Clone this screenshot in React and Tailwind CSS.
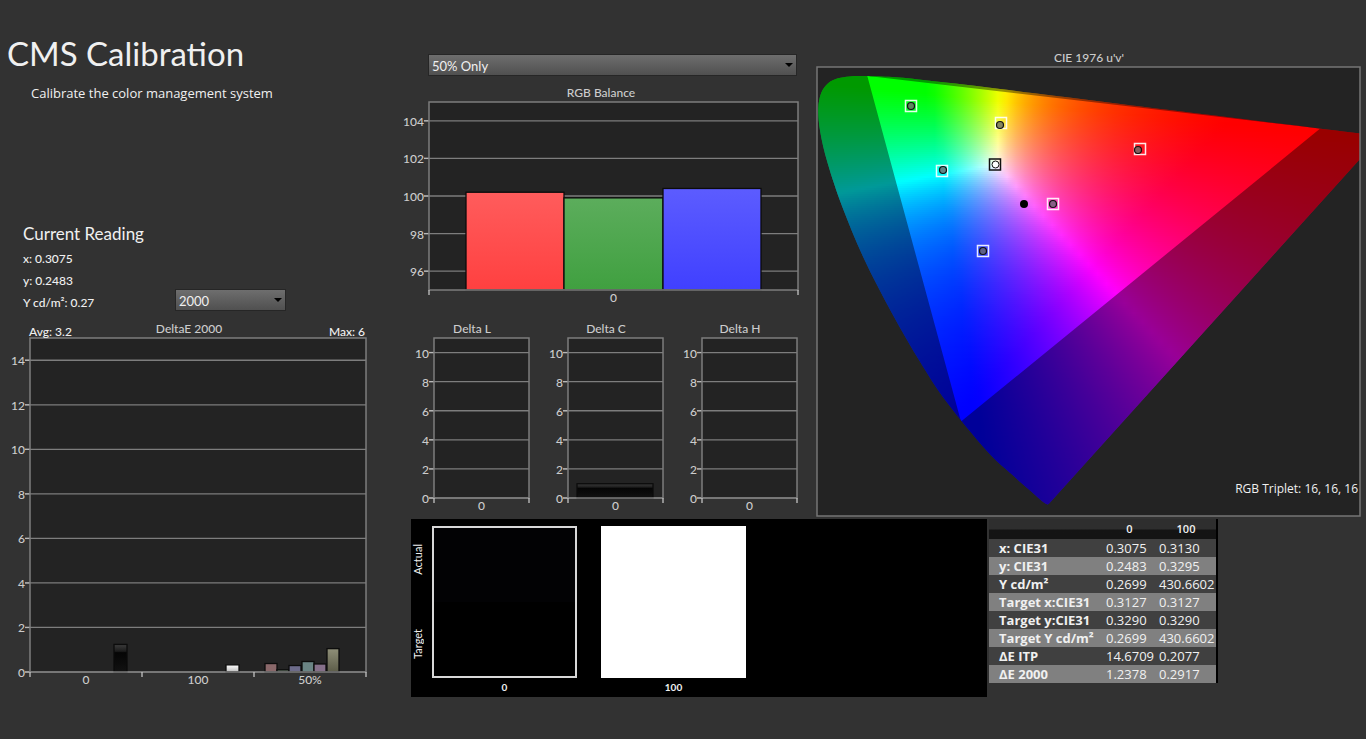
import { useMemo } from 'react';

const LINE = '#7d7d7d';

// ---------- data ----------

const deltaEBars = [
  { x: 114, w: 13, value: 1.24, fill: 'url(#barBlack)' },
  { x: 226, w: 13, value: 0.32, fill: 'url(#barWhite)' },
  { x: 265, w: 12, value: 0.38, fill: '#8a686a' },
  { x: 277, w: 12, value: 0.1, fill: '#5f6f5f' },
  { x: 289, w: 12, value: 0.29, fill: '#6c6b8a' },
  { x: 302, w: 12, value: 0.47, fill: '#6a8484' },
  { x: 314, w: 12, value: 0.36, fill: '#86708a' },
  { x: 327, w: 12, value: 1.05, fill: 'url(#barOlive)' },
];

const rgbBars = [
  { x: 64, w: 98, value: 100.2, fill: 'url(#barRed)' },
  { x: 162, w: 99, value: 99.9, fill: 'url(#barGreen)' },
  { x: 261, w: 98, value: 100.4, fill: 'url(#barBlue)' },
];

const deltas = [
  { title: 'Delta L', bars: [] },
  { title: 'Delta C', bars: [{ x: 33, w: 76, value: 0.98, fill: 'url(#barBlack)' }] },
  { title: 'Delta H', bars: [] },
];

const readings = [
  ['x: CIE31', '0.3075', '0.3130'],
  ['y: CIE31', '0.2483', '0.3295'],
  ['Y cd/m²', '0.2699', '430.6602'],
  ['Target x:CIE31', '0.3127', '0.3127'],
  ['Target y:CIE31', '0.3290', '0.3290'],
  ['Target Y cd/m²', '0.2699', '430.6602'],
  ['ΔE ITP', '14.6709', '0.2077'],
  ['ΔE 2000', '1.2378', '0.2917'],
];

// target square and measured dot, in plot pixels
const markers = [
  { box: [95, 40], dot: [95, 40], fill: '#5f875f' },
  { box: [185, 57], dot: [184, 59], fill: '#87875f' },
  { box: [126, 105], dot: [127, 104], fill: '#5f8787' },
  { box: [324, 83], dot: [322, 84], fill: '#875f5f' },
  { box: [237, 138], dot: [237, 138], fill: '#875f87' },
  { box: [167, 185], dot: [167, 185], fill: '#5f5f87' },
];

// ---------- u'v' diagram ----------

const U0 = 1;
const U_SCALE = 904;
const V0 = 450;
const V_SCALE = 750;

// spectral locus, CIE 1931 xy
const locusXY = [
  [0.1741, 0.005], [0.1714, 0.0051], [0.1644, 0.0109], [0.1566, 0.0177],
  [0.144, 0.0297], [0.1241, 0.0578], [0.1096, 0.0868], [0.0913, 0.1327],
  [0.0687, 0.2007], [0.0454, 0.295], [0.0235, 0.4127], [0.0082, 0.5384],
  [0.0039, 0.6548], [0.0139, 0.7502], [0.0389, 0.812], [0.0743, 0.8338],
  [0.1142, 0.8262], [0.1547, 0.8059], [0.2296, 0.7543], [0.3016, 0.6923],
  [0.3731, 0.6245], [0.4441, 0.5547], [0.5125, 0.4866], [0.5752, 0.4242],
  [0.627, 0.3725], [0.6915, 0.3083], [0.7347, 0.2653],
];

const toPlot = ([x, y]) => {
  const d = -2 * x + 12 * y + 3;
  return [U0 + (U_SCALE * 4 * x) / d, V0 - (V_SCALE * 9 * y) / d];
};

const triangle = [[0.708, 0.292], [0.17, 0.797], [0.131, 0.046]].map(toPlot);

const smoothPath = (pts) => {
  let d = `M${pts[0].join(' ')}`;
  for (let i = 0; i < pts.length - 1; i++) {
    const p0 = pts[Math.max(i - 1, 0)];
    const p1 = pts[i];
    const p2 = pts[i + 1];
    const p3 = pts[Math.min(i + 2, pts.length - 1)];
    const c1 = [p1[0] + (p2[0] - p0[0]) / 6, p1[1] + (p2[1] - p0[1]) / 6];
    const c2 = [p2[0] - (p3[0] - p1[0]) / 6, p2[1] - (p3[1] - p1[1]) / 6];
    d += `C${[...c1, ...c2, ...p2].map((n) => n.toFixed(2)).join(' ')}`;
  }
  return `${d}Z`;
};

const locusPath = smoothPath(locusXY.map(toPlot));

const colorAt = (px, py) => {
  const u = (px - U0) / U_SCALE;
  const v = Math.max((V0 - py) / V_SCALE, 0.005);
  const X = (9 * u) / (4 * v);
  const Z = (12 - 3 * u - 20 * v) / (4 * v);
  const rgb = [
    3.2406 * X - 1.5372 - 0.4986 * Z,
    -0.9689 * X + 1.8758 + 0.0415 * Z,
    0.0557 * X - 0.204 + 1.057 * Z,
  ].map((c) => Math.max(c, 0));
  const peak = Math.max(...rgb);
  return `rgb(${rgb.map((c) => Math.round((255 * c) / peak)).join(',')})`;
};

const ROW = 2;
const STOPS = 60;

function buildRows() {
  const rows = [];
  for (let y = 8; y < 442; y += ROW) {
    const stops = [];
    for (let i = 0; i <= STOPS; i++) {
      stops.push(colorAt(1 + (543 * i) / STOPS, y + ROW / 2));
    }
    rows.push({ y, stops });
  }
  return rows;
}

function GamutDiagram() {
  const rows = useMemo(buildRows, []);

  return (
    <svg viewBox="0 0 550 453" className="block w-full h-auto" role="img" aria-label="CIE 1976 u'v' diagram">
      <defs>
        <clipPath id="plotClip">
          <rect x="1" y="1" width="543" height="449" />
        </clipPath>
        <clipPath id="locusClip">
          <path d={locusPath} />
        </clipPath>
        {rows.map((row) => (
          <linearGradient key={row.y} id={`row${row.y}`} gradientUnits="userSpaceOnUse" x1="1" x2="544" y1="0" y2="0">
            {row.stops.map((color, i) => (
              <stop key={i} offset={i / STOPS} stopColor={color} />
            ))}
          </linearGradient>
        ))}
      </defs>
      <rect x="1" y="1" width="543" height="449" fill="#232323" />
      <g clipPath="url(#plotClip)">
        <g clipPath="url(#locusClip)">
          {rows.map((row) => (
            <rect key={row.y} x="1" y={row.y} width="543" height={ROW} fill={`url(#row${row.y})`} shapeRendering="crispEdges" />
          ))}
          <path
            d={`M0 0H550V453H0ZM${triangle.map((p) => p.join(' ')).join('L')}Z`}
            fillRule="evenodd"
            fill="#000"
            fillOpacity="0.4"
          />
        </g>
      </g>
      <rect x="1" y="1" width="543" height="449" fill="none" stroke="#767676" strokeWidth="1.5" />
      {markers.map(({ box, dot, fill }) => (
        <g key={box.join()}>
          <rect x={box[0] - 5.5} y={box[1] - 5.5} width="11" height="11" fill="none" stroke="#fff" strokeOpacity="0.9" strokeWidth="1.5" />
          <circle cx={dot[0]} cy={dot[1]} r="3.5" fill={fill} stroke="#111" strokeWidth="1.2" />
        </g>
      ))}
      <rect x="173.5" y="93" width="11" height="11" fill="none" stroke="#111" strokeWidth="1.5" />
      <circle cx="179.5" cy="98.5" r="3.5" fill="#fff" stroke="#111" />
      <circle cx="208" cy="138" r="4" fill="#000" />
      <text x="542" y="427" textAnchor="end" fontSize="12" fill="#f0f0f0" fontFamily="'Open Sans', sans-serif">
        RGB Triplet: 16, 16, 16
      </text>
    </svg>
  );
}

// ---------- bar charts ----------

function ChartGradients() {
  const gradients = {
    barRed: ['#ff5c5c', '#ff4040'],
    barGreen: ['#5cad5c', '#40a040'],
    barBlue: ['#5c5cff', '#4040ff'],
    barWhite: ['#ffffff', '#bcbcbc'],
    barOlive: ['#8f8f78', '#5c5c48'],
  };
  return (
    <svg className="absolute w-0 h-0" aria-hidden="true">
      <defs>
        {Object.entries(gradients).map(([id, [from, to]]) => (
          <linearGradient key={id} id={id} x1="0" x2="0" y1="0" y2="1">
            <stop offset="0" stopColor={from} />
            <stop offset="1" stopColor={to} />
          </linearGradient>
        ))}
        <linearGradient id="barBlack" x1="0" x2="0" y1="0" y2="1">
          <stop offset="0" stopColor="#3c3c3c" />
          <stop offset="0.25" stopColor="#1c1c1c" />
          <stop offset="0.3" stopColor="#050505" />
          <stop offset="1" stopColor="#121212" />
        </linearGradient>
      </defs>
    </svg>
  );
}

function BarChart({ width, height, title, titleX, plot, min, max, ticks, bars, categories, children }) {
  const bottom = plot.y + plot.h;
  const right = plot.x + plot.w;
  const yOf = (value) => bottom - ((value - min) / (max - min)) * plot.h;
  const slot = plot.w / categories.length;

  return (
    <svg
      viewBox={`0 0 ${width} ${height}`}
      className="block w-full h-auto"
      role="img"
      aria-label={title}
      fontFamily="Lato, sans-serif"
      fontSize="12"
      fontWeight="500"
      fill="#cccccc"
    >
      <rect x={plot.x} y={plot.y} width={plot.w} height={plot.h} fill="#232323" />
      {ticks.map((tick) => (
        <g key={tick}>
          <line x1={plot.x - 5} x2={right} y1={yOf(tick)} y2={yOf(tick)} stroke={LINE} strokeWidth="1.3" />
          <line x1={plot.x - 5} x2={plot.x} y1={yOf(tick)} y2={yOf(tick)} stroke="#b8b8b8" strokeWidth="1.3" />
          <text x={plot.x - 5} y={yOf(tick) + 5} textAnchor="end">{tick}</text>
        </g>
      ))}
      {bars.map((bar) => (
        <rect
          key={bar.x}
          x={bar.x}
          y={yOf(bar.value)}
          width={bar.w}
          height={bottom - yOf(bar.value)}
          fill={bar.fill}
          stroke="#0c0c0c"
          strokeWidth="1.3"
        />
      ))}
      <rect x={plot.x} y={plot.y} width={plot.w} height={plot.h} fill="none" stroke={LINE} strokeWidth="1.5" />
      {categories.map((label, i) => (
        <g key={label}>
          <line x1={plot.x + slot * i} x2={plot.x + slot * i} y1={bottom} y2={bottom + 5} stroke="#c4c4c4" strokeWidth="1.3" />
          <text x={plot.x + slot * (i + 0.5)} y={bottom + 12} textAnchor="middle">{label}</text>
        </g>
      ))}
      <line x1={right} x2={right} y1={bottom} y2={bottom + 5} stroke="#c4c4c4" strokeWidth="1.3" />
      <text x={titleX} y={plot.y - 5} textAnchor="middle">{title}</text>
      {children}
    </svg>
  );
}

// ---------- controls ----------

function Dropdown({ label, value, className }) {
  return (
    <div className={`relative ${className}`}>
      <select
        aria-label={label}
        defaultValue={value}
        className="block w-full h-[22px] appearance-none border border-[#262626] bg-linear-to-b from-[#6e6e6e] to-[#505050] pt-0.5 pl-[3px] pr-5 text-[13px] leading-[18px] text-[#f0f0f0]"
      >
        <option>{value}</option>
      </select>
      <svg viewBox="0 0 8 4" className="absolute right-1 top-[9px] w-2 h-1 pointer-events-none" aria-hidden="true">
        <path d="M0 0H8L4 4Z" fill="#000" />
      </svg>
    </div>
  );
}

function Swatch({ label, className }) {
  return (
    <figure className="w-[145px]">
      <div className={`h-[152px] border-2 ${className}`} />
      <figcaption className="text-center text-[10px] leading-[18px] font-bold">{label}</figcaption>
    </figure>
  );
}

function ReadingsTable() {
  return (
    <table className="w-[229px] table-fixed border-collapse border-r-2 border-black font-['Open_Sans',sans-serif] text-[13px]">
      <colgroup>
        <col />
        <col className="w-[53px]" />
        <col className="w-[61px]" />
      </colgroup>
      <thead>
        <tr className="h-5 bg-linear-to-b from-[#2e2e2e] from-50% to-[#141414] to-55% text-[11px] leading-5">
          <td />
          <th scope="col" className="p-0 font-semibold">0</th>
          <th scope="col" className="p-0 font-semibold">100</th>
        </tr>
      </thead>
      <tbody>
        {readings.map(([name, black, white]) => (
          <tr key={name} className="h-[18px] leading-[18px] odd:bg-[#404040] even:bg-[#808080]">
            <th scope="row" className="p-0 pl-2.5 text-left font-bold whitespace-nowrap">{name}</th>
            <td className="p-0 pl-[3px]">{black}</td>
            <td className="p-0 pl-[3px]">{white}</td>
          </tr>
        ))}
      </tbody>
    </table>
  );
}

export default function App() {
  return (
    <div className="min-h-screen bg-[#323232] font-[Lato,sans-serif] text-[#f0f0f0]">
      <ChartGradients />
      <div className="grid grid-cols-[402fr_964fr]">
        <section>
          <h1 className="mt-[33px] pl-[7px] text-[33px] leading-10">CMS Calibration</h1>
          <p className="mt-2.5 pl-[31px] font-['Open_Sans',sans-serif] text-[13px] leading-5">
            Calibrate the color management system
          </p>
          <div className="mt-[119px] flex items-end pl-[23px]">
            <div className="w-[152px]">
              <h2 className="mb-0.5 text-[17px] leading-6">Current Reading</h2>
              <p className="text-xs leading-[22px] font-medium">x: 0.3075</p>
              <p className="text-xs leading-[22px] font-medium">y: 0.2483</p>
              <p className="text-xs leading-[22px] font-medium">Y cd/m²: 0.27</p>
            </div>
            <Dropdown label="DeltaE formula" value="2000" className="mb-[3px] w-[111px]" />
          </div>
          <BarChart
            width={402}
            height={379}
            title="DeltaE 2000"
            titleX={189}
            plot={{ x: 30, y: 24, w: 336, h: 334 }}
            min={0}
            max={15}
            ticks={[0, 2, 4, 6, 8, 10, 12, 14]}
            bars={deltaEBars}
            categories={['0', '100', '50%']}
          >
            <text x="29" y="22" fill="#f0f0f0">Avg: 3.2</text>
            <text x="365" y="22" textAnchor="end" fill="#f0f0f0">Max: 6</text>
          </BarChart>
        </section>

        <div>
          <div className="grid grid-cols-[414fr_550fr]">
            <section className="pt-[54px]">
              <Dropdown label="Saturation set" value="50% Only" className="ml-[26px] mr-[19px]" />
              <BarChart
                width={414}
                height={234}
                title="RGB Balance"
                titleX={199}
                plot={{ x: 27, y: 26, w: 369, h: 188 }}
                min={95}
                max={105}
                ticks={[96, 98, 100, 102, 104]}
                bars={rgbBars}
                categories={['0']}
              />
              <div className="grid grid-cols-3 pl-2 pr-1">
                {deltas.map(({ title, bars }) => (
                  <BarChart
                    key={title}
                    width={134}
                    height={209}
                    title={title}
                    titleX={62}
                    plot={{ x: 24, y: 28, w: 95, h: 160 }}
                    min={0}
                    max={11}
                    ticks={[0, 2, 4, 6, 8, 10]}
                    bars={bars}
                    categories={['0']}
                  />
                ))}
              </div>
            </section>

            <section className="pt-[50px]">
              <h2 className="pr-1 text-center text-xs leading-4 font-medium text-[#cccccc]">CIE 1976 u'v'</h2>
              <GamutDiagram />
            </section>
          </div>

          <div className="flex items-start gap-0.5 pl-[9px]">
            <section className="flex h-[178px] w-[576px] gap-6 bg-black pt-[7px]">
              <div className="-mr-6 flex w-[21px] flex-col justify-between pt-[18px] pb-[38px] text-[11px] leading-[14px]">
                <span className="[writing-mode:vertical-rl] rotate-180">Actual</span>
                <span className="[writing-mode:vertical-rl] rotate-180">Target</span>
              </div>
              <Swatch label="0" className="border-[#d8d8d8] bg-linear-to-b from-[#020204] from-50% to-black to-50%" />
              <Swatch label="100" className="border-white bg-white" />
            </section>
            <ReadingsTable />
          </div>
        </div>
      </div>
    </div>
  );
}
